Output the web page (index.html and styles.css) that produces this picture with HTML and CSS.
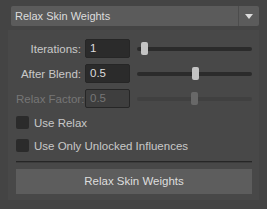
FILE: index.html
```html
<!DOCTYPE html>
<html lang="en">
<head>
    <meta charset="UTF-8">
    <title>Relax Skin Weights</title>
    <link rel="stylesheet" href="styles.css">
</head>
<body>
    <div class="header">
        <span class="header-title">Relax Skin Weights</span>
        <span class="header-arrow"><span class="arrow"></span></span>
    </div>

    <div class="panel">
        <!-- numeric fields with sliders -->
        <div class="field-row">
            <span class="label">Iterations:</span>
            <div class="field">1</div>
            <div class="slider"><div class="track"></div><div class="thumb thumb-iter"></div></div>
        </div>
        <div class="field-row">
            <span class="label">After Blend:</span>
            <div class="field">0.5</div>
            <div class="slider"><div class="track"></div><div class="thumb thumb-blend"></div></div>
        </div>
        <div class="field-row disabled">
            <span class="label">Relax Factor:</span>
            <div class="field">0.5</div>
            <div class="slider"><div class="track"></div><div class="thumb thumb-factor"></div></div>
        </div>

        <!-- options -->
        <div class="check-row first">
            <span class="checkbox"></span>
            <span class="check-label">Use Relax</span>
        </div>
        <div class="check-row">
            <span class="checkbox"></span>
            <span class="check-label">Use Only Unlocked Influences</span>
        </div>

        <div class="separator"></div>

        <div class="button">Relax Skin Weights</div>
    </div>
</body>
</html>
```

FILE: styles.css
```css
body {
    margin: 0;
    padding: 0;
    width: 267px;
    height: 209px;
    background-color: #444444;
    font-family: "Liberation Sans", Arial, sans-serif;
    font-size: 11.5px;
    color: #cccccc;
    overflow: hidden;
}

.header {
    display: flex;
    align-items: stretch;
    margin: 6px 8px 0 11px;
    height: 20px;
    background-color: #5b5b5b;
    border-radius: 2px;
}

.header-title {
    flex: 1;
    display: flex;
    align-items: center;
    padding-left: 4px;
    font-size: 11px;
    color: #dddddd;
}

.header-arrow {
    width: 20px;
    border-left: 1px solid #4c4c4c;
    display: flex;
    align-items: center;
    justify-content: center;
}

.arrow {
    width: 0;
    height: 0;
    border-left: 4.5px solid transparent;
    border-right: 4.5px solid transparent;
    border-top: 5px solid #dcdcdc;
}

.panel {
    margin: 4px 0 0 8px;
    width: 251px;
    height: 170px;
    box-sizing: border-box;
    background-color: #484848;
    padding: 9px 7px 6px 8px;
    display: flex;
    flex-direction: column;
}

.field-row {
    display: flex;
    align-items: center;
    height: 19px;
    margin-bottom: 6px;
}

.label {
    width: 65px;
    text-align: right;
    white-space: nowrap;
    color: #c8c8c8;
}

.field {
    margin-left: 4px;
    width: 45px;
    height: 19px;
    box-sizing: border-box;
    background-color: #2b2b2b;
    border: 1px solid #262626;
    border-radius: 2px;
    padding-left: 4px;
    line-height: 17px;
    color: #dddddd;
}

.slider {
    position: relative;
    margin-left: 7px;
    flex: 1;
    height: 19px;
}

.track {
    position: absolute;
    left: 0;
    right: 0;
    top: 8px;
    height: 4px;
    border-radius: 2px;
    background-color: #2b2b2b;
}

.thumb {
    position: absolute;
    top: 3px;
    width: 7px;
    height: 13px;
    border-radius: 2px;
    background-color: #c4c4c4;
}

.thumb-iter { left: 4px; }
.thumb-blend { left: 55px; }
.thumb-factor { left: 54px; }

.disabled .label,
.disabled .field {
    color: #767676;
}

.disabled .field {
    background-color: #3e3e3e;
}

.disabled .track {
    background-color: #404040;
}

.disabled .thumb {
    background-color: #686868;
}

.check-row {
    display: flex;
    align-items: center;
    height: 13px;
    margin-top: 10px;
}

.check-row.first {
    margin-top: 2px;
}

.checkbox {
    width: 13px;
    height: 13px;
    background-color: #2b2b2b;
    border-radius: 2px;
}

.check-label {
    margin-left: 5px;
    color: #c8c8c8;
}

.separator {
    margin-top: 9px;
    height: 1px;
    background-color: #262626;
    border-bottom: 1px solid #3c3c3c;
}

.button {
    margin-top: 6px;
    height: 25px;
    line-height: 25px;
    text-align: center;
    background-color: #5d5d5d;
    color: #dddddd;
}
```
